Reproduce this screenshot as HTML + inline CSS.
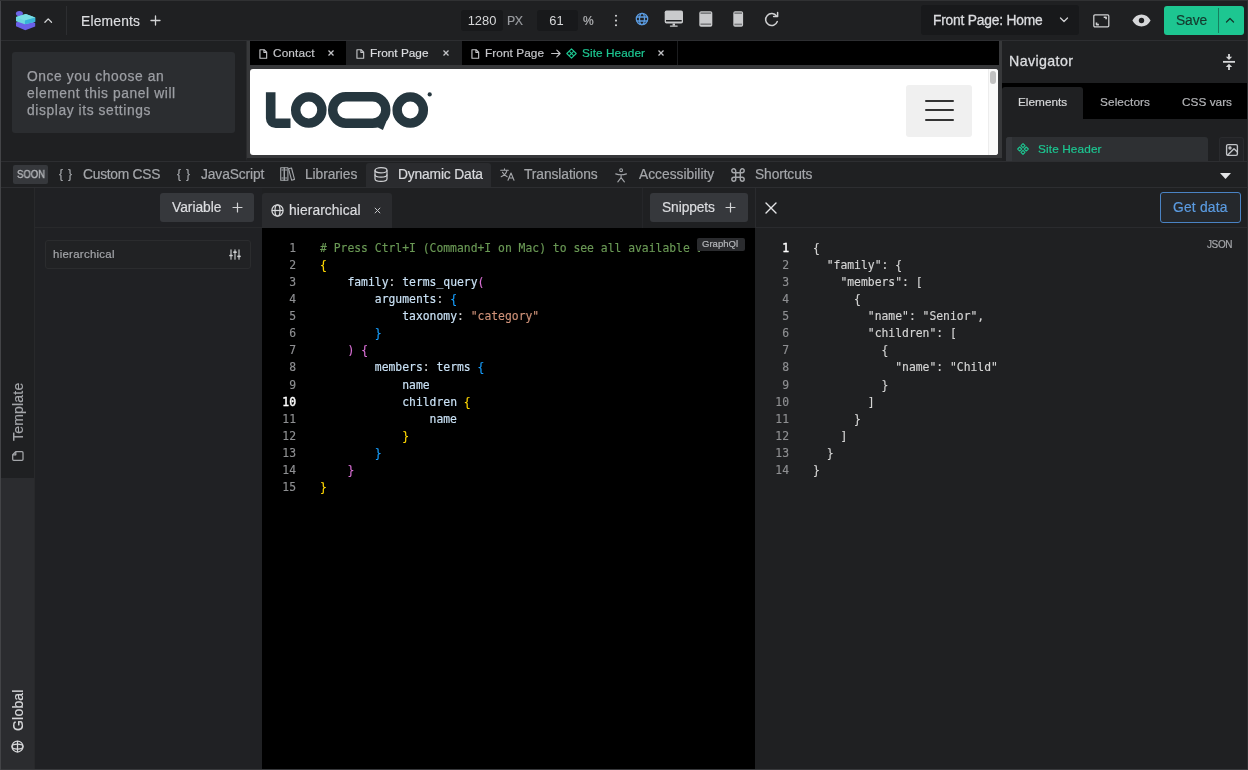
<!DOCTYPE html>
<html lang="en">
<head>
<meta charset="utf-8">
<title>Builder – Dynamic Data</title>
<style>
*{box-sizing:border-box;margin:0;padding:0}
html,body{width:1248px;height:770px;overflow:hidden;background:#1f2022}
body{position:relative;font-family:"Liberation Sans",Arial,sans-serif;color:#c8c9cc;font-size:14px;-webkit-font-smoothing:antialiased}
.abs{position:absolute}
.t{position:absolute;white-space:nowrap;line-height:1}
.t,.bt,.code,.ln,.inp{will-change:transform}
.bt,.t{-webkit-text-stroke:.2px currentColor}
.code,.ln{-webkit-text-stroke:.15px currentColor}
svg{position:absolute;overflow:visible}
/* top bar */
#topbar{left:0;top:0;width:1248px;height:41px;background:#1f2022;border-bottom:1px solid #2d2e31}
#edge-l{left:0;top:0;width:1px;height:770px;background:#434447;z-index:50}
#edge-t{left:0;top:0;width:1248px;height:1px;background:#303133;z-index:50}
.inp{background:#18191b;border-radius:3px;color:#d6d7d9;font-size:12.9px;text-align:center}
/* left panel */
#lpanel{left:1px;top:41px;width:245px;height:120px;background:#1f2022}
#hint{left:12px;top:52px;width:223px;height:81px;background:#2b2d30;border-radius:3px}
/* canvas */
#canvas{left:246px;top:41px;width:756px;height:120px;background:#37383a;border-left:1px solid #2a2b2d;border-bottom:3px solid #212224}
#ctabs{left:250px;top:41px;width:749px;height:24px;background:#000}
.ctab{position:absolute;top:0;height:24px}
#preview{left:250px;top:69px;width:748px;height:86px;background:#fff;border-radius:3px;overflow:hidden}
/* navigator */
#nav{left:1002px;top:41px;width:246px;height:120px;background:#1f2022}
/* bottom tabbar */
#btabs{left:0;top:161px;width:1248px;height:27px;background:#1f2022;border-top:1px solid #2d2e31;border-bottom:1px solid #2d2e31}
.bt{position:absolute;white-space:nowrap;line-height:1;font-size:13.8px;color:#a4a6aa;top:167.7px}
/* main */
#side{left:1px;top:188px;width:34px;height:582px;background:#2b2c2f;border-right:1px solid #28292b}
#side-act{left:1px;top:188px;width:33px;height:290px;background:#1f2022}
#varpanel{left:35px;top:188px;width:227px;height:582px;background:#202124}
#editor{left:262px;top:228px;width:493px;height:542px;background:#000}
#result{left:755px;top:188px;width:493px;height:582px;background:#1f2022}
.btn{position:absolute;background:#36383c;border-radius:3px}
.code{position:absolute;font-family:"DejaVu Sans Mono","Liberation Mono",monospace;font-size:11.38px;line-height:17.07px;white-space:pre;color:#d4d4d4}
.ln{position:absolute;font-family:"DejaVu Sans Mono","Liberation Mono",monospace;font-size:11.38px;line-height:17.07px;text-align:right;color:#8e8f92;white-space:pre}
.ln b{color:#fff;font-weight:normal;-webkit-text-stroke:.4px #fff}
.cm{color:#6a9955}.y{color:#ffd700}.p{color:#da70d6}.b{color:#179fff}.s{color:#ce9178}.n{color:#c9e1f5}
</style>
</head>
<body>
<!-- TOPBAR -->
<div class="abs" id="topbar"></div>
<!-- logo -->
<svg style="left:0;top:0" width="70" height="41" viewBox="0 0 70 41">
  <ellipse cx="19.4" cy="13.6" rx="3.5" ry="2.6" fill="#6d65e6"/>
  <polygon points="16,22.6 25.5,19 35.200,22.900 35.200,26.400 25.300,30.300 16,26.200" fill="#6a60e8"/>
  <polygon points="16,17 25.800,13.900 35.200,17.500 35.200,21.800 24.900,24.300 16,21.300" fill="#6cd6e0"/>
  <polygon points="16,17 25.800,13.900 35.200,17.500 24.900,20.600" fill="#78dde4"/>
  <polygon points="24.900,20.600 35.200,17.500 35.200,21.800 24.900,24.300" fill="#38b4d8"/>
  <polyline points="44.900,22.200 48.200,18.900 51.500,22.200" fill="none" stroke="#d2d3d5" stroke-width="1.300" stroke-linecap="round" stroke-linejoin="round"/>
</svg>
<div class="abs" style="left:66px;top:6px;width:1px;height:29px;background:#2d2e31"></div>
<div class="t" id="t-elements" style="left:81px;top:14.5px;color:#dcdde0;font-size:13.8px;letter-spacing:0.212px">Elements</div>
<svg style="left:150px;top:15px" width="11" height="11" viewBox="0 0 11 11"><path d="M5.5 1v9M1 5.5h9" stroke="#d2d3d5" stroke-width="1.3" fill="none" stroke-linecap="round"/></svg>
<!-- width / zoom -->
<div class="abs inp" style="left:461px;top:10px;width:42px;height:21px;line-height:21px" id="inp-w">1280</div>
<div class="t" id="t-px" style="left:507px;top:15px;color:#9a9ca0;font-size:12.3px;letter-spacing:-0.406px">PX</div>
<div class="abs inp" style="left:537px;top:10px;width:41px;height:21px;line-height:21px" id="inp-z"><span style="position:relative;left:-1px">61</span></div>
<div class="t" id="t-pct" style="left:583.3px;top:15.2px;color:#b4b5b8;font-size:12px;letter-spacing:-0.272px">%</div>
<svg style="left:613px;top:12px" width="6" height="17" viewBox="0 0 6 17"><circle cx="3" cy="3.800" r="1.050" fill="#cfd0d2"/><circle cx="3" cy="8.600" r="1.050" fill="#cfd0d2"/><circle cx="3" cy="13.300" r="1.050" fill="#cfd0d2"/></svg>
<!-- globe blue -->
<svg style="left:635px;top:12px" width="14" height="14" viewBox="0 0 14 14" fill="none" stroke="#5b9be0" stroke-width="1.3"><circle cx="7" cy="7" r="5.7"/><ellipse cx="7" cy="7" rx="2.5" ry="5.7"/><path d="M1.6 5h10.8M1.6 9h10.8"/></svg>
<!-- desktop -->
<svg style="left:664px;top:10px" width="20" height="18" viewBox="0 0 20 18"><rect x="0.7" y="0.5" width="18.3" height="13" rx="1.8" fill="#c9cacc"/><rect x="2" y="10" width="15.7" height="1.5" fill="#1f2022"/><rect x="8.6" y="13.5" width="2.4" height="2.2" fill="#c9cacc"/><rect x="5.8" y="15.4" width="8" height="1.3" rx=".6" fill="#c9cacc"/></svg>
<!-- tablet -->
<svg style="left:699px;top:11px" width="14" height="16" viewBox="0 0 14 16"><rect x="0.3" y="0.3" width="13" height="15.4" rx="1.8" fill="#c9cacc"/><rect x="1.5" y="1.6" width="10.6" height="1" fill="#1f2022" opacity=".75"/><rect x="1.5" y="12.4" width="10.6" height="1.6" fill="#1f2022" opacity=".45"/></svg>
<!-- phone -->
<svg style="left:733px;top:11px" width="11" height="16" viewBox="0 0 11 16"><rect x="0.3" y="0.2" width="9.8" height="15.6" rx="1.8" fill="#c9cacc"/><rect x="1.4" y="1.6" width="7.6" height="1" fill="#1f2022" opacity=".75"/><rect x="1.4" y="12.6" width="7.6" height="1.6" fill="#1f2022" opacity=".45"/></svg>
<!-- reload -->
<svg style="left:763px;top:11px" width="17" height="17" viewBox="0 0 17 17" fill="none" stroke="#cfd0d2" stroke-width="1.5" stroke-linecap="round" stroke-linejoin="round"><path d="M13.6 5.2A6 6 0 1 0 14.3 10.6"/><path d="M14.6 1.6v4h-4" /></svg>
<!-- page selector -->
<div class="abs" style="left:921px;top:5px;width:158px;height:30px;background:#18191b;border-radius:3px"></div>
<div class="t" id="t-fp" style="-webkit-text-stroke:.3px #dcdde0;left:933px;top:13.5px;color:#dcdde0;font-size:13.8px;letter-spacing:-0.202px">Front Page: Home</div>
<svg style="left:1059px;top:16px" width="10" height="8" viewBox="0 0 10 8"><polyline points="1.5,2 5,5.5 8.5,2" fill="none" stroke="#cfd0d2" stroke-width="1.3" stroke-linecap="round" stroke-linejoin="round"/></svg>
<!-- fullscreen -->
<svg style="left:1093px;top:13.600px" width="17" height="14" viewBox="0 0 17 14" fill="none" stroke="#cfd0d2" stroke-width="1.250"><rect x="0.800" y="0.800" width="15" height="12" rx="1.100"/><path d="M3.500 8.600v2h2.400M13.100 5.200v-2h-2.400" stroke-width="1.600" stroke-linejoin="round"/></svg>
<!-- eye -->
<svg style="left:1132px;top:14px" width="19" height="13" viewBox="0 0 19 13"><path d="M0.4 6.5C2.3 2.6 5.6 0.5 9.5 0.5s7.2 2.1 9.1 6c-1.9 3.900-5.200 6-9.100 6s-7.200-2.100-9.100-6z" fill="#d6d7d9"/><circle cx="9.500" cy="6.500" r="2.700" fill="#1f2022"/></svg>
<!-- save -->
<div class="abs" style="left:1164px;top:6px;width:80px;height:29px;background:#1dc691;border-radius:3px"></div>
<div class="abs" style="left:1218px;top:8px;width:1px;height:25px;background:#16805f"></div>
<div class="t" id="t-save" style="left:1176px;top:14px;color:#15382d;font-size:13.8px;letter-spacing:-0.084px">Save</div>
<svg style="left:1225px;top:16px" width="10" height="8" viewBox="0 0 10 8"><polyline points="1.500,6 5,2.500 8.500,6" fill="none" stroke="#15382d" stroke-width="1.300" stroke-linecap="round" stroke-linejoin="round"/></svg>

<!-- LEFT PANEL -->
<div class="abs" id="lpanel"></div>
<div class="abs" id="hint"></div>
<div class="t" id="t-hint" style="left:27px;top:68px;font-size:13.8px;line-height:17.1px;color:#9c9ea3;letter-spacing:.6px;-webkit-text-stroke:.25px #9c9ea3;white-space:normal;width:190px">Once you choose an<br>element this panel will<br>display its settings</div>

<!-- CANVAS -->
<div class="abs" id="canvas"></div>
<div class="abs" id="ctabs">
  <div class="ctab" style="left:96px;width:116px;background:#1f2022"></div>
  <div class="ctab" style="left:427px;width:1px;background:#1c1d1f"></div>
  <svg style="left:8.5px;top:7.500px" width="8.600" height="10" viewBox="0 0 9 11" fill="none" stroke="#c4c5c8" stroke-width="1.250" stroke-linejoin="round"><path d="M0.800 0.800h4.600l2.800 2.800v6.600h-7.400z"/><path d="M5.200 0.800v3h3"/></svg>
  <div class="t" id="t-contact" style="left:23px;top:7px;color:#c4c5c8;font-size:11.8px;letter-spacing:0.141px">Contact</div>
  <svg style="left:78.5px;top:9.400px;margin-left:-0.800px" width="6" height="6" viewBox="0 0 6 6"><path d="M0.500 0.500l5 5M5.500 0.500l-5 5" stroke="#c4c5c8" stroke-width="1.250" fill="none"/></svg><svg style="left:105.5px;top:7.500px" width="8.600" height="10" viewBox="0 0 9 11" fill="none" stroke="#c4c5c8" stroke-width="1.250" stroke-linejoin="round"><path d="M0.800 0.800h4.600l2.800 2.800v6.600h-7.400z"/><path d="M5.200 0.800v3h3"/></svg>
  <div class="t" id="t-fp1" style="left:120px;top:7px;color:#dcdde0;font-size:11.8px;letter-spacing:0.014px">Front Page</div>
  <svg style="left:193.5px;top:9.400px;margin-left:-0.800px" width="6" height="6" viewBox="0 0 6 6"><path d="M0.500 0.500l5 5M5.500 0.500l-5 5" stroke="#c4c5c8" stroke-width="1.250" fill="none"/></svg><svg style="left:220.5px;top:7.500px" width="8.600" height="10" viewBox="0 0 9 11" fill="none" stroke="#c4c5c8" stroke-width="1.250" stroke-linejoin="round"><path d="M0.800 0.800h4.600l2.800 2.800v6.600h-7.400z"/><path d="M5.200 0.800v3h3"/></svg>
  <div class="t" id="t-fp2" style="left:235px;top:7px;color:#c4c5c8;font-size:11.8px;letter-spacing:0.069px">Front Page</div>
  <svg style="left:301px;top:8px" width="10" height="9" viewBox="0 0 10 9" fill="none" stroke="#c4c5c8" stroke-width="1.1" stroke-linecap="round" stroke-linejoin="round"><path d="M0.600 4.500h8.400M5.800 1.200l3.300 3.300-3.300 3.300"/></svg>
  <svg style="left:315.700px;top:6.800px" width="11" height="11" viewBox="0 0 11 11" fill="none" stroke="#1dc691" stroke-width="1.100" stroke-linejoin="round"><path d="M5.500 0.800l4.700 4.700-4.700 4.700-4.700-4.700z"/><path d="M3.150 3.150l4.700 4.700M7.850 3.150l-4.700 4.700"/></svg>
  <div class="t" id="t-sh1" style="left:332px;top:7px;color:#1dc691;font-size:11.8px;letter-spacing:0.070px">Site Header</div>
  <svg style="left:409px;top:9.400px;margin-left:-0.800px" width="6" height="6" viewBox="0 0 6 6"><path d="M0.500 0.500l5 5M5.500 0.500l-5 5" stroke="#c4c5c8" stroke-width="1.250" fill="none"/></svg>
</div>
<div class="abs" id="preview">
  <!-- LOQO logo -->
  <svg style="left:14px;top:22px" width="170" height="42" viewBox="264 91 170 42">
    <g fill="none" stroke="#26373f" stroke-width="9.400">
      <path d="M270.700 92.300v26a5 5 0 0 0 5 5h14.800" stroke-width="9.600"/>
      <circle cx="308.800" cy="110" r="13.100"/>
      <rect x="332.700" y="96.800" width="53.100" height="26.400" rx="13.200"/>
      <circle cx="410.250" cy="110" r="13.100"/>
    </g>
    <path d="M371 124l15.400-2.500-3.500 8.600z" fill="#26373f"/>
    <circle cx="429.700" cy="94.400" r="2.100" fill="#26373f"/>
  </svg>
  <!-- hamburger -->
  <div class="abs" style="left:656px;top:16px;width:66px;height:52px;background:#f0f0f0;border-radius:3px"></div>
  <div class="abs" style="left:675px;top:30.500px;width:29px;height:2px;background:#333;border-radius:1px"></div>
  <div class="abs" style="left:675px;top:40px;width:29px;height:2px;background:#333;border-radius:1px"></div>
  <div class="abs" style="left:675px;top:49.500px;width:29px;height:2px;background:#333;border-radius:1px"></div>
  <!-- scrollbar -->
  <div class="abs" style="left:738px;top:0;width:10px;height:86px;background:#fafafa;border-left:1px solid #ededed"></div>
  <div class="abs" style="left:740px;top:2px;width:6px;height:12.500px;background:#c1c1c1;border-radius:3px"></div>
</div>

<!-- NAVIGATOR -->
<div class="abs" id="nav">
  <div class="t" id="t-nav" style="left:7.4px;top:13.3px;color:#dcdde0;font-weight:normal;-webkit-text-stroke:.3px #dcdde0;font-size:14.2px;letter-spacing:0.408px">Navigator</div>
  <svg style="left:220px;top:12px" width="14" height="18" viewBox="0 0 14 18"><path d="M1 8.850h12" stroke="#d6d7d9" stroke-width="1.800" fill="none"/><path d="M7 1v3.500M7 17v-3.500" stroke="#d6d7d9" stroke-width="1.800" fill="none"/><path d="M3.800 3.800h6.400L7 7zM3.800 13.900h6.400L7 10.800z" fill="#d6d7d9"/></svg>
  <div class="abs" style="left:0;top:42px;width:246px;height:36px;background:#000"></div>
  <div class="abs" style="left:0;top:46px;width:81px;height:32px;background:#1f2022;border-radius:3px 3px 0 0"></div>
  <div class="t" id="t-nel" style="left:16px;top:55.8px;color:#d6d7d9;font-size:11.8px;letter-spacing:0.002px">Elements</div>
  <div class="t" id="t-nsel" style="left:98px;top:55.8px;color:#b4b5b8;font-size:11.8px;letter-spacing:0.102px">Selectors</div>
  <div class="t" id="t-ncss" style="left:180px;top:55.8px;color:#b4b5b8;font-size:11.8px;letter-spacing:0.025px">CSS vars</div>
  <div class="abs" style="left:4px;top:96px;width:202px;height:24px;background:#2e3033;border-radius:3px 3px 0 0"></div>
  <div class="abs" style="left:4px;top:96px;width:6px;height:24px;background:#35373b;border-radius:3px 0 0 0"></div>
  <svg style="left:15px;top:102px" width="12" height="12" viewBox="0 0 12 12" fill="none" stroke="#1dc691" stroke-width="1.100" stroke-linejoin="round"><path d="M6 0.700l2 2-2 2-2-2zM6 7.300l2 2-2 2-2-2zM2.700 4l2 2-2 2-2-2zM9.300 4l2 2-2 2-2-2z"/></svg>
  <div class="t" id="t-nsh" style="left:36px;top:102.5px;color:#1dc691;font-size:11.8px;letter-spacing:0.120px">Site Header</div>
  <div class="abs" style="left:217px;top:96px;width:25px;height:24px;background:#222326;border:1px solid #2a2b2e;border-bottom:none;border-radius:3px 3px 0 0"></div>
  <svg style="left:223.500px;top:103px" width="12" height="12" viewBox="0 0 12 12" fill="none" stroke="#c2c4c8" stroke-width="1.350" stroke-linejoin="round"><rect x="0.600" y="0.600" width="10.800" height="10.800" rx="1.400"/><circle cx="4" cy="4" r="1"/><path d="M1.500 11.200l6.500-6.500 3.400 3.400"/></svg>
</div>

<!-- BOTTOM TABBAR -->
<div class="abs" id="btabs"></div>
<div class="abs" style="left:366px;top:163px;width:125px;height:24px;background:#2a2b2e;border-radius:3px 3px 0 0"></div>
<div class="abs" style="left:13px;top:165px;width:35px;height:19px;background:#36383c;border-radius:2px"></div>
<div class="t" id="t-soon" style="left:16.500px;top:169.800px;color:#b4b6ba;font-size:10px;letter-spacing:0;transform:scaleX(.95);transform-origin:0 0;-webkit-text-stroke:.35px #b4b6ba">SOON</div>
<div class="bt" id="t-br1" style="left:59px;top:167.500px;letter-spacing:.8px;font-size:12px">{ }</div>
<div class="bt" id="t-css" style="left:82.500px;font-size:13.8px;letter-spacing:-0.250px">Custom CSS</div>
<div class="bt" id="t-br2" style="left:177px;top:167.500px;letter-spacing:.8px;font-size:12px">{ }</div>
<div class="bt" id="t-js" style="left:201px;font-size:13.8px;letter-spacing:-0.114px">JavaScript</div>
<!-- libraries icon -->
<svg style="left:280px;top:167px" width="15" height="14" viewBox="0 0 15 14" fill="none" stroke="#a4a6aa" stroke-width="1.100" stroke-linejoin="round"><rect x="0.700" y="0.700" width="3.600" height="12.600"/><rect x="4.300" y="0.700" width="3.600" height="12.600"/><path d="M8.600 1.800l2.900-0.800 3 11.400-2.900 0.800z"/><path d="M1.500 3h2M5.100 3h2M1.500 11h2M5.100 11h2"/></svg>
<div class="bt" id="t-lib" style="left:305px;font-size:13.8px;letter-spacing:-0.078px">Libraries</div>
<!-- db icon -->
<svg style="left:374px;top:167px" width="14" height="15" viewBox="0 0 14 15" fill="none" stroke="#d0d1d4" stroke-width="1.200"><ellipse cx="7" cy="3.300" rx="6" ry="2.600"/><path d="M1 3.300v8.400c0 1.400 2.700 2.600 6 2.600s6-1.200 6-2.600V3.300"/><path d="M1 7.500c0 1.400 2.700 2.600 6 2.600s6-1.200 6-2.600"/></svg>
<div class="bt" id="t-dyn" style="left:398px;color:#d8d9dc;font-size:13.8px;letter-spacing:-0.151px">Dynamic Data</div>
<!-- translations icon -->
<svg style="left:500px;top:168px" width="15" height="13" viewBox="0 0 15 13" fill="none" stroke="#a4a6aa" stroke-width="1.100" stroke-linecap="round" stroke-linejoin="round"><path d="M0.700 2.300h7.600M4.500 0.700v1.600M7 2.300c-0.600 2.600-2.700 5-5.800 6.400M2.500 4.300c0.800 1.800 2.600 3.500 4.700 4.400"/><path d="M8 12.300l3-7.300 3 7.300M9 10h4"/></svg>
<div class="bt" id="t-tr" style="left:524px;font-size:13.8px;letter-spacing:-0.086px">Translations</div>
<!-- accessibility icon -->
<svg style="left:615px;top:167.500px" width="12.200" height="15" viewBox="0 0 13 16" fill="none" stroke="#a4a6aa" stroke-width="1.200" stroke-linecap="round" stroke-linejoin="round"><circle cx="6.500" cy="2.300" r="1.500"/><path d="M0.800 6.300c3.600 1.200 7.800 1.200 11.400 0M6.500 7.200v3M6.500 10.200l-3.500 4.600M6.500 10.200l3.500 4.600"/></svg>
<div class="bt" id="t-acc" style="left:638.500px;font-size:13.8px;letter-spacing:0.005px">Accessibility</div>
<!-- command icon -->
<svg style="left:730.500px;top:167.500px" width="14" height="14" viewBox="0 0 14 14" fill="none" stroke="#a4a6aa" stroke-width="1.450"><path d="M4.700 4.700h4.600v4.600H4.700zM4.700 4.700V2.800a1.950 1.950 0 1 0-1.950 1.900zM9.300 4.700h1.950A1.950 1.950 0 1 0 9.300 2.800zM9.300 9.300v1.950a1.950 1.950 0 1 0 1.950-1.950zM4.700 9.300H2.750A1.950 1.950 0 1 0 4.700 11.250z"/></svg>
<div class="bt" id="t-sc" style="left:754.500px;font-size:13.8px;letter-spacing:-0.123px">Shortcuts</div>
<svg style="left:1220px;top:173px" width="11" height="6" viewBox="0 0 11 6"><path d="M0 0h11L5.500 6z" fill="#e4e5e7"/></svg>

<!-- MAIN -->
<div class="abs" id="side"></div>
<div class="abs" id="side-act"></div>
<div class="t" id="t-tpl" style="left:11px;top:441px;font-size:14px;color:#a4a6aa;transform-origin:0 0;transform:rotate(-90deg);letter-spacing:.2px">Template</div>
<svg style="left:12px;top:451.300px" width="12" height="10" viewBox="0 0 12 10" fill="none" stroke="#a4a6aa" stroke-width="1.250" stroke-linejoin="round"><path d="M1.700 9.300a1 1 0 0 1-1-1v-4.600l3-3h6.300a1 1 0 0 1 1 1v6.600a1 1 0 0 1-1 1z"/><path d="M0.900 3.800h2.900v-2.900"/></svg>
<div class="t" id="t-glob" style="left:11px;top:731px;font-size:14px;color:#d6d7d9;transform-origin:0 0;transform:rotate(-90deg);letter-spacing:.2px">Global</div>
<svg style="left:11.250px;top:740.200px" width="13" height="13" viewBox="0 0 13 13" fill="none" stroke="#d6d7d9" stroke-width="1.250"><circle cx="6.500" cy="6.500" r="5.500"/><ellipse cx="6.500" cy="6.500" rx="5.500" ry="2.500"/><path d="M6.500 0.900v11.200"/></svg>
<div class="abs" id="varpanel"></div>
<div class="abs" style="left:35px;top:227px;width:227px;height:1px;background:#28292b"></div>
<div class="btn" style="left:160px;top:193px;width:94px;height:29px"></div>
<div class="t" id="t-var" style="left:172px;top:201.2px;color:#dcdde0;font-size:13.8px;letter-spacing:-0.016px">Variable</div>
<svg style="left:231.500px;top:202px" width="11" height="11" viewBox="0 0 11 11"><path d="M5.500 1v9M1 5.500h9" stroke="#d2d3d5" stroke-width="1.200" fill="none" stroke-linecap="round"/></svg>
<div class="abs" style="left:45px;top:240.400px;width:206px;height:28.400px;border:1px solid #2b2c2e;border-radius:3px;background:#212224"></div>
<div class="t" id="t-hier1" style="left:53px;top:249.1px;color:#a4a6aa;font-size:11.4px;letter-spacing:0.295px">hierarchical</div>
<svg style="left:229px;top:249px" width="12" height="11" viewBox="0 0 12 11" fill="none" stroke="#cfd0d2" stroke-width="1.200" stroke-linecap="round"><path d="M2 0.800v9.400M6 0.800v9.400M10 0.800v9.400" stroke-width="1.100"/><path d="M1 6.500h2M5 3.200h2M9 7.300h2" stroke-width="1.700"/></svg>
<div class="abs" id="result"></div>
<!-- query tab row -->
<div class="abs" style="left:262px;top:188px;width:493px;height:40px;background:#1f2022"></div>
<div class="abs" style="left:262px;top:193px;width:130px;height:35px;background:#2a2b2e;border-radius:3px 3px 0 0"></div>
<svg style="left:270.800px;top:203.700px" width="13" height="13" viewBox="0 0 13 13" fill="none" stroke="#d6d7d9" stroke-width="1.250"><circle cx="6.500" cy="6.500" r="5.600"/><ellipse cx="6.500" cy="6.500" rx="2.500" ry="5.600"/><path d="M0.900 6.500h11.200"/></svg>
<div class="t" id="t-hier2" style="left:289px;top:203.5px;color:#dcdde0;font-size:13.8px;letter-spacing:0.094px">hierarchical</div>
<svg style="left:374px;top:207px" width="7" height="7" viewBox="0 0 7 7"><path d="M0.800 0.800l5.400 5.400M6.200 0.800l-5.400 5.400" stroke="#c4c5c8" stroke-width="1" fill="none"/></svg>
<div class="abs" style="left:642px;top:188px;width:1px;height:40px;background:#252629"></div>
<div class="btn" style="left:650px;top:193px;width:98px;height:29px"></div>
<div class="t" id="t-snip" style="left:662px;top:200.5px;color:#dcdde0;font-size:13.8px;letter-spacing:-0.100px">Snippets</div>
<svg style="left:725px;top:202px" width="11" height="11" viewBox="0 0 11 11"><path d="M5.500 1v9M1 5.500h9" stroke="#d2d3d5" stroke-width="1.200" fill="none" stroke-linecap="round"/></svg>
<div class="abs" style="left:755px;top:188px;width:1px;height:40px;background:#2a2b2e"></div>
<!-- result header -->
<svg style="left:765px;top:202px" width="12" height="12" viewBox="0 0 12 12"><path d="M1 1l10 10M11 1L1 11" stroke="#e4e5e7" stroke-width="1.400" fill="none" stroke-linecap="round"/></svg>
<div class="abs" style="left:1160px;top:192px;width:81px;height:31px;border:1px solid #4a83c4;border-radius:3px;background:#25282c"></div>
<div class="t" id="t-get" style="left:1173px;top:201.2px;color:#5b9be0;font-size:13.8px;letter-spacing:0.223px">Get data</div>
<div class="abs" style="left:756px;top:227px;width:492px;height:1px;background:#2a2b2e"></div>
<div class="t" id="t-json" style="left:1207px;top:240px;color:#a4a6aa;font-size:10px;letter-spacing:-0.391px">JSON</div>
<div class="ln" style="left:774.500px;top:240.300px;width:14px"><b>1</b>
2
3
4
5
6
7
8
9
10
11
12
13
14</div>
<div class="code" id="c-json" style="left:812.800px;top:240.300px">{
  "family": {
    "members": [
      {
        "name": "Senior",
        "children": [
          {
            "name": "Child"
          }
        ]
      }
    ]
  }
}</div>
<!-- editor -->
<div class="abs" id="editor">
  <div class="ln" style="left:12.500px;top:12.300px;width:21px">1
2
3
4
5
6
7
8
9
<b>10</b>
11
12
13
14
15</div>
  <div class="abs" style="left:58.200px;top:12.300px;width:380px;height:260px;overflow:hidden"><div class="code" id="c-gql" style="left:0;top:0"><span class="cm"># Press Ctrl+I (Command+I on Mac) to see all available snippets</span>
<span class="y">{</span>
    <span class="n">family</span>: <span class="n">terms_query</span><span class="p">(</span>
        <span class="n">arguments</span>: <span class="b">{</span>
            <span class="n">taxonomy</span>: <span class="s">"category"</span>
        <span class="b">}</span>
    <span class="p">)</span> <span class="p">{</span>
        <span class="n">members</span>: <span class="n">terms</span> <span class="b">{</span>
            <span class="n">name</span>
            <span class="n">children</span> <span class="y">{</span>
                <span class="n">name</span>
            <span class="y">}</span>
        <span class="b">}</span>
    <span class="p">}</span>
<span class="y">}</span></div></div>
  <div class="abs" style="left:435px;top:10px;width:48px;height:13px;background:#2a2b2e;border-radius:2px"></div>
  <div class="t" id="t-gql" style="left:440px;top:11px;color:#b4b6ba;font-size:9.5px;letter-spacing:0.016px">GraphQl</div>
</div>

<div class="abs" style="left:1247px;top:0;width:1px;height:770px;background:#2c2d30;z-index:50"></div>
<div class="abs" style="left:0;top:769px;width:1248px;height:1px;background:#38393c;z-index:50"></div>
<div class="abs" id="edge-l"></div>
<div class="abs" id="edge-t"></div>
</body>
</html>
